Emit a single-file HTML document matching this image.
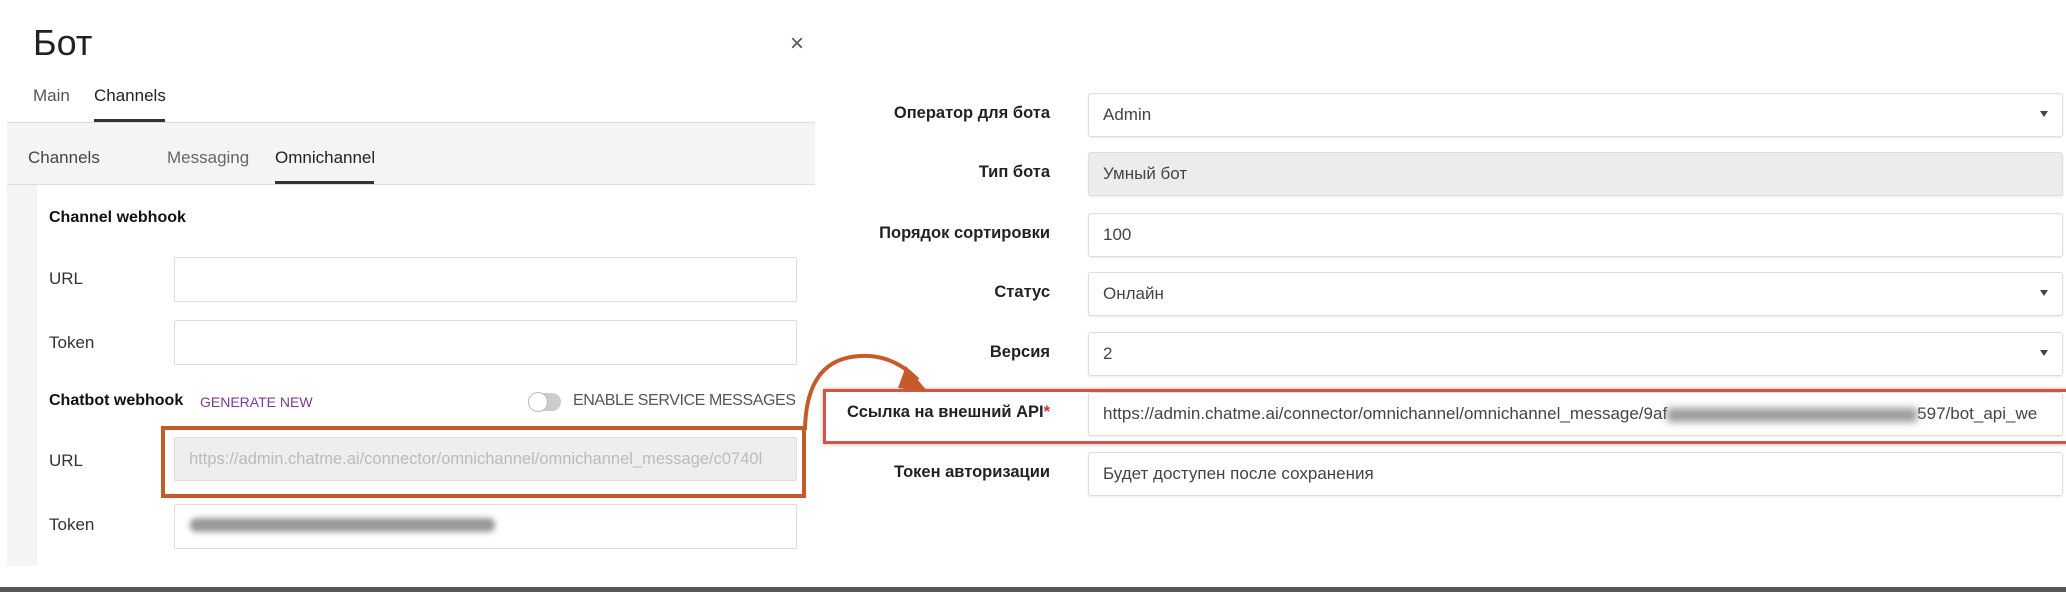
<!DOCTYPE html>
<html><head><meta charset="utf-8"><style>
*{margin:0;padding:0;box-sizing:border-box}
body{width:2066px;height:592px;position:relative;background:#fff;font-family:"Liberation Sans",Arial,sans-serif;overflow:hidden}
.a{position:absolute}
.l{color:#333;font-size:17px}
.inp{position:absolute;background:#fff;border:1px solid #ddd;border-radius:2px}
.rl{position:absolute;right:1016px;font-weight:bold;font-size:16.5px;color:#222;text-align:right;white-space:nowrap}
.ri{position:absolute;left:1088px;width:975px;height:44px;border:1px solid #ddd;border-radius:3px;background:#fff;font-size:17px;color:#444;padding:11px 14px;box-shadow:0 1px 2px rgba(0,0,0,.08);white-space:nowrap;overflow:hidden}
.arr{position:absolute;right:14px;top:17px;width:0;height:0;border-left:4px solid transparent;border-right:4px solid transparent;border-top:6px solid #444}
</style></head><body>
<div class="a" style="left:33px;top:22px;font-size:36px;color:#222">Бот</div>
<div class="a" style="left:790px;top:30px;font-size:24px;color:#555">×</div>
<div class="a l" style="left:33px;top:86px;color:#555">Main</div>
<div class="a l" style="left:94px;top:86px;color:#222">Channels</div>
<div class="a" style="left:94px;top:119px;width:71px;height:3px;background:#333"></div>
<div class="a" style="left:7px;top:122px;width:808px;height:444px;background:#f4f4f4;border-top:1px solid #ddd"></div>
<div class="a l" style="left:28px;top:148px;color:#444">Channels</div>
<div class="a l" style="left:167px;top:148px;color:#666">Messaging</div>
<div class="a l" style="left:275px;top:148px;color:#222">Omnichannel</div>
<div class="a" style="left:275px;top:181px;width:99px;height:3px;background:#333"></div>
<div class="a" style="left:7px;top:184px;width:808px;height:1px;background:#ddd"></div>
<div class="a" style="left:37px;top:185px;width:778px;height:381px;background:#fff"></div>
<div class="a" style="left:49px;top:209px;font-size:16px;font-weight:bold;color:#111">Channel webhook</div>
<div class="a l" style="left:49px;top:269px">URL</div>
<div class="inp" style="left:174px;top:257px;width:623px;height:45px"></div>
<div class="a l" style="left:49px;top:333px">Token</div>
<div class="inp" style="left:174px;top:320px;width:623px;height:45px"></div>
<div class="a" style="left:49px;top:392px;font-size:16px;font-weight:bold;color:#111">Chatbot webhook</div>
<div class="a" style="left:200px;top:394px;font-size:14px;color:#7b3c8f">GENERATE NEW</div>
<div class="a" style="left:528px;top:393px;width:33px;height:18px;border-radius:9px;background:#ccc"></div>
<div class="a" style="left:528px;top:392px;width:20px;height:20px;border-radius:50%;background:#fff;border:1px solid #bbb"></div>
<div class="a" style="left:573px;top:392px;font-size:16px;color:#555;letter-spacing:-0.4px">ENABLE SERVICE MESSAGES</div>
<div class="a l" style="left:49px;top:451px">URL</div>
<div class="inp" style="left:174px;top:437px;width:623px;height:44px;background:#eee;color:#bbb;font-size:16.5px;padding:12px 14px;white-space:nowrap;overflow:hidden">https://admin.chatme.ai/connector/omnichannel/omnichannel_message/c0740l</div>
<div class="a" style="left:161px;top:426px;width:645px;height:72px;border:4px solid #c55a2a"></div>
<div class="a l" style="left:49px;top:515px">Token</div>
<div class="inp" style="left:174px;top:504px;width:623px;height:45px"></div>
<div class="a" style="left:190px;top:518px;width:305px;height:14px;background:#999;filter:blur(3px);border-radius:6px"></div>
<div class="rl" style="top:104px">Оператор для бота</div>
<div class="ri" style="top:93px">Admin<div class="arr"></div></div>
<div class="rl" style="top:163px">Тип бота</div>
<div class="ri" style="top:152px;background:#ececec">Умный бот</div>
<div class="rl" style="top:224px">Порядок сортировки</div>
<div class="ri" style="top:213px">100</div>
<div class="rl" style="top:283px">Статус</div>
<div class="ri" style="top:272px">Онлайн<div class="arr"></div></div>
<div class="rl" style="top:343px">Версия</div>
<div class="ri" style="top:332px">2<div class="arr"></div></div>
<div class="rl" style="top:403px">Ссылка на внешний API<span style="color:#c33">*</span></div>
<div class="ri" style="top:392px">https://admin.chatme.ai/connector/omnichannel/omnichannel_message/9af<span style="display:inline-block;width:250px;height:14px;background:#999;filter:blur(4px);vertical-align:middle"></span>597/bot_api_we</div>
<div class="a" style="left:823px;top:389px;width:1250px;height:55px;border:3px solid #d0554a;box-shadow:0 0 4px rgba(208,85,74,.5)"></div>
<div class="rl" style="top:463px">Токен авторизации</div>
<div class="ri" style="top:452px">Будет доступен после сохранения</div>
<svg class="a" style="left:0;top:0" width="2066" height="592">
<path d="M805 430 C806 360 845 355 870 356 C895 358 910 372 918 380" fill="none" stroke="#c55a2a" stroke-width="4"/>
<path d="M906 366 L928 392 L898 388 Z" fill="#c55a2a"/>
</svg>
<div class="a" style="left:0;top:587px;width:2066px;height:5px;background:#555"></div>
</body></html>
